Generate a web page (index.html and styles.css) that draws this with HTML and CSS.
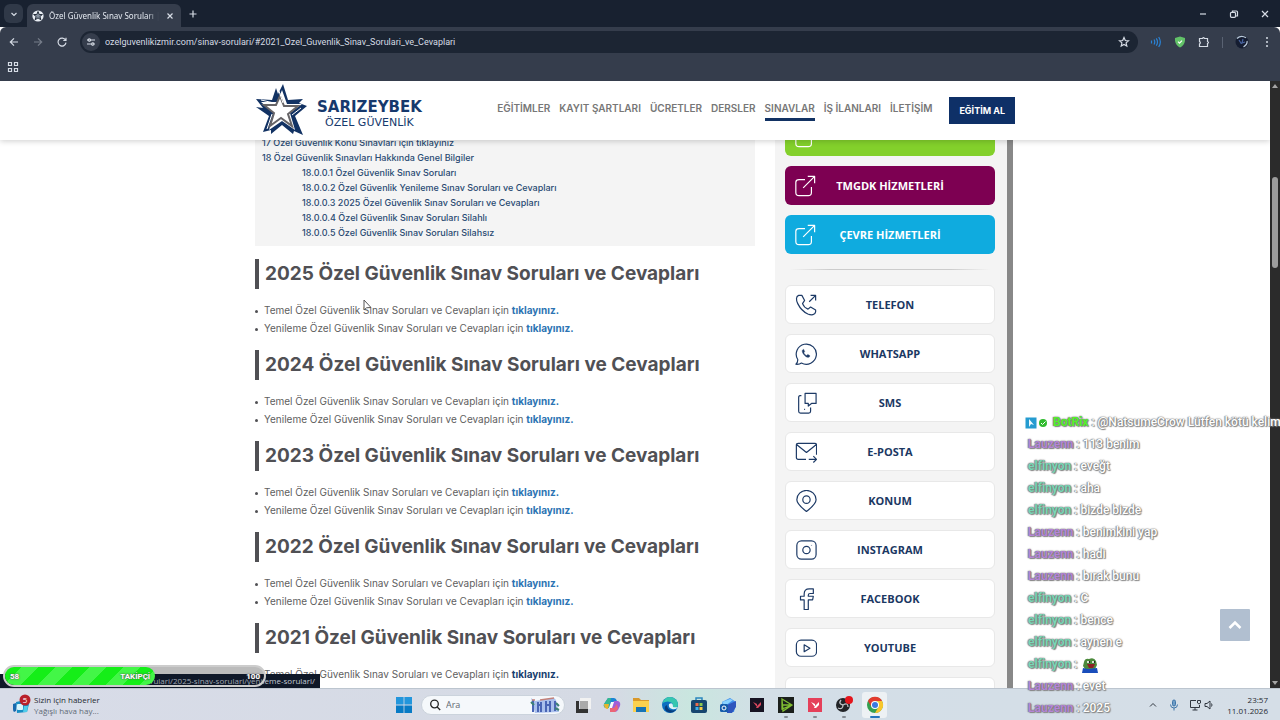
FILE: index.html
```html
<!DOCTYPE html>
<html lang="tr">
<head>
  <meta charset="UTF-8">
  <meta name="viewport" content="width=device-width, initial-scale=1">
  <title>Özel Güvenlik Sınav Soruları</title>
  <link rel="stylesheet" href="styles.css">
</head>
<body>
  <div class="tabstrip">
    <button class="tab-search" aria-label="Sekme ara"><svg width="10" height="10" viewBox="0 0 10 10"><path d="M2.500 4l2.500 2.500 2.500-2.500"/></svg></button>
    <div class="tab">
      <svg class="favicon" width="12" height="12" viewBox="0 0 12 12"><circle cx="6" cy="6" r="5.600" fill="#e8edf3" stroke="none"/><path d="M6 1.500l1.200 3h3.200L7.900 6.500l1 3.300L6 7.900 3.100 9.800l1-3.300L1.600 4.500h3.200z" fill="#8893a1" stroke="#27303e"/></svg>
      <span class="tab-title">Özel Güvenlik Sınav Soruları | Ö</span>
      <button class="tab-close" aria-label="Kapat"><svg width="8" height="8" viewBox="0 0 8 8"><path d="M1.500 1.500l5 5M6.500 1.500l-5 5"/></svg></button>
    </div>
    <button class="tab-new" aria-label="Yeni sekme"><svg width="10" height="10" viewBox="0 0 10 10"><path d="M5 1.500v7M1.500 5h7"/></svg></button>
    <div class="window-buttons">
      <button aria-label="Küçült"><svg width="10" height="10" viewBox="0 0 10 10"><path d="M2 5h6"/></svg></button>
      <button aria-label="Geri yükle"><svg width="10" height="10" viewBox="0 0 10 10"><rect x="1.500" y="3.300" width="5" height="5" rx="1"/><path d="M3.500 3V2h4q1 0 1 1v4h-1.500"/></svg></button>
      <button aria-label="Kapat"><svg width="10" height="10" viewBox="0 0 10 10"><path d="M2 2l6 6M8 2L2 8"/></svg></button>
    </div>
  </div>

  <div class="toolbar">
    <button aria-label="Geri"><svg width="12" height="12" viewBox="0 0 12 12"><path d="M10 6H2.500M6 2.300L2.300 6 6 9.700"/></svg></button>
    <button class="dim" aria-label="İleri"><svg width="12" height="12" viewBox="0 0 12 12"><path d="M2 6h7.500M6 2.300L9.700 6 6 9.700"/></svg></button>
    <button aria-label="Yenile"><svg width="12" height="12" viewBox="0 0 12 12"><path d="M9.500 4A4 4 0 1 0 10 6.700M10 1.800v2.700H7.300"/></svg></button>
    <div class="omnibox">
      <span class="site-info"><svg width="10" height="10" viewBox="0 0 10 10"><path d="M1 3h1M5 3h4M1 7h4M8.500 7H9"/><circle cx="3.300" cy="3" r="1.200"/><circle cx="6.800" cy="7" r="1.200"/></svg></span>
      <input type="text" aria-label="Adres çubuğu" value="ozelguvenlikizmir.com/sinav-sorulari/#2021_Ozel_Guvenlik_Sinav_Sorulari_ve_Cevaplari">
      <button aria-label="Yer işareti ekle"><svg width="12" height="12" viewBox="0 0 12 12"><path d="M6 1.500l1.300 3 3.200.3-2.400 2.100.7 3.200L6 8.400l-2.800 1.700.7-3.200L1.500 4.800l3.200-.3z"/></svg></button>
    </div>
    <div class="extensions">
      <button aria-label="Ses"><svg class="blue" width="12" height="12" viewBox="0 0 12 12"><path d="M1.500 4.500v3M4 3.500q1.500 2.500 0 5M6.300 2.300q2.400 3.700 0 7.400M8.700 1q3.300 5 0 10"/></svg></button>
      <button aria-label="Koruma"><svg width="12" height="12" viewBox="0 0 12 12"><path d="M6 .6l5 1.300c.3 4.200-1 7.500-5 9.500C2 9.400.7 6.100 1 1.900z" fill="#62c268" stroke="none"/><path d="M4 5.700l1.500 1.500L8 4.600" stroke="#fff"/></svg></button>
      <button aria-label="Uzantılar"><svg width="12" height="12" viewBox="0 0 12 12"><path d="M1.500 2.500h3q1-1.700 2 0h3v3q2 1 0 2v3h-8V8q1.700-1.200 0-2.500z"/></svg></button>
      <span class="separator"></span>
      <button aria-label="Profil"><svg width="14" height="14" viewBox="0 0 14 14"><circle cx="7" cy="7" r="6.500" fill="#151d31" stroke="none"/><path d="M2 3.500q4-4 9-.8M12 6q.8 3.500-3.500 6" stroke="#b9c9d8"/><path d="M4 5l2.500 4M8 4l-1 4 3-1" stroke="#48639f"/></svg></button>
      <button aria-label="Menü"><svg width="12" height="12" viewBox="0 0 12 12"><g fill="#d6dce5" stroke="none"><circle cx="6" cy="2" r="1"/><circle cx="6" cy="6" r="1"/><circle cx="6" cy="10" r="1"/></g></svg></button>
    </div>
  </div>

  <div class="bookmarks">
    <button aria-label="Uygulamalar"><svg width="12" height="12" viewBox="0 0 12 12"><path d="M1.500 1.500h3v3h-3zM7.500 1.500h3v3h-3zM1.500 7.500h3v3h-3zM7.500 7.500h3v3h-3z"/></svg></button>
  </div>

  <div class="viewport">
    <div class="page">
      <header class="site-header">
        <div class="container header-row">
          <a class="logo" href="#">
            <svg width="54" height="54" viewBox="0 0 54 54">
              <path fill="#123263" d="M21 4l2 6 5-10 5 16 15-1-4 4 8 3-12 10 8 19-9-4-1 3-11-9-11 9 0-4-8 2 6-16L1 23l7 1-7-9 16 1z"/>
              <path fill="#fff" d="M27 6l5 14h15L35 29l5 17-13-9-13 9 5-17L6 18h16z"/>
              <path fill="#fff" stroke="#666467" stroke-width="2" d="M25 12l4 10 14 0-10 8 4 12-11-8-11 8 4-13L9 21h12z"/>
              <path fill="none" stroke="#fff" stroke-width="1" d="M24 7l4 12M6 16l13 3M17 30l-5 15M46 24l-9 7"/>
            </svg>
            <span class="logo-text"><strong>SARIZEYBEK</strong><span>ÖZEL GÜVENLİK</span></span>
          </a>
          <nav class="main-nav">
            <a href="#">EĞİTİMLER</a>
            <a href="#">KAYIT ŞARTLARI</a>
            <a href="#">ÜCRETLER</a>
            <a href="#">DERSLER</a>
            <a class="active" href="#">SINAVLAR</a>
            <a href="#">İŞ İLANLARI</a>
            <a href="#">İLETİŞİM</a>
          </nav>
          <a class="cta" href="#">EĞİTİM AL</a>
        </div>
      </header>

      <div class="container columns">
        <main>
          <ul class="toc">
            <li><a href="#">17 Özel Güvenlik Konu Sınavları için tıklayınız</a></li>
            <li><a href="#">18 Özel Güvenlik Sınavları Hakkında Genel Bilgiler</a>
              <ul>
                <li><a href="#">18.0.0.1 Özel Güvenlik Sınav Soruları</a></li>
                <li><a href="#">18.0.0.2 Özel Güvenlik Yenileme Sınav Soruları ve Cevapları</a></li>
                <li><a href="#">18.0.0.3 2025 Özel Güvenlik Sınav Soruları ve Cevapları</a></li>
                <li><a href="#">18.0.0.4 Özel Güvenlik Sınav Soruları Silahlı</a></li>
                <li><a href="#">18.0.0.5 Özel Güvenlik Sınav Soruları Silahsız</a></li>
              </ul>
            </li>
          </ul>

          <h2>2025 Özel Güvenlik Sınav Soruları ve Cevapları</h2>
          <ul class="exams">
            <li>Temel Özel Güvenlik Sınav Soruları ve Cevapları için <a href="#">tıklayınız.</a></li>
            <li>Yenileme Özel Güvenlik Sınav Soruları ve Cevapları için <a href="#">tıklayınız.</a></li>
          </ul>
          <h2>2024 Özel Güvenlik Sınav Soruları ve Cevapları</h2>
          <ul class="exams">
            <li>Temel Özel Güvenlik Sınav Soruları ve Cevapları için <a href="#">tıklayınız.</a></li>
            <li>Yenileme Özel Güvenlik Sınav Soruları ve Cevapları için <a href="#">tıklayınız.</a></li>
          </ul>
          <h2>2023 Özel Güvenlik Sınav Soruları ve Cevapları</h2>
          <ul class="exams">
            <li>Temel Özel Güvenlik Sınav Soruları ve Cevapları için <a href="#">tıklayınız.</a></li>
            <li>Yenileme Özel Güvenlik Sınav Soruları ve Cevapları için <a href="#">tıklayınız.</a></li>
          </ul>
          <h2>2022 Özel Güvenlik Sınav Soruları ve Cevapları</h2>
          <ul class="exams">
            <li>Temel Özel Güvenlik Sınav Soruları ve Cevapları için <a href="#">tıklayınız.</a></li>
            <li>Yenileme Özel Güvenlik Sınav Soruları ve Cevapları için <a href="#">tıklayınız.</a></li>
          </ul>
          <h2>2021 Özel Güvenlik Sınav Soruları ve Cevapları</h2>
          <ul class="exams">
            <li>Temel Özel Güvenlik Sınav Soruları ve Cevapları için <a class="dark" href="#">tıklayınız.</a></li>
          </ul>
        </main>

        <aside class="sidebar">
          <div class="side-list">
            <a class="side-btn green" href="#" aria-label="Hizmetler"><svg viewBox="0 0 24 24"><path d="M13 4.500H5.500Q2 4.500 2 8v11q0 3.500 3.500 3.500h10Q19 22.500 19 19v-7M10 14L22 2M15 1.500h7.500V9"/></svg></a>
            <a class="side-btn purple" href="#"><svg viewBox="0 0 24 24"><path d="M12 5H5.500Q2 5 2 8v11q0 3.500 3.500 3.500h10Q19 22.500 19 19v-6M10 14L22 2M15 1.500h7.500V9"/></svg><span>TMGDK HİZMETLERİ</span></a>
            <a class="side-btn cyan" href="#"><svg viewBox="0 0 24 24"><path d="M12 5H5.500Q2 5 2 8v11q0 3.500 3.500 3.500h10Q19 22.500 19 19v-6M10 14L22 2M15 1.500h7.500V9"/></svg><span>ÇEVRE HİZMETLERİ</span></a>
            <hr>
            <a class="side-btn" href="#"><svg viewBox="0 0 24 24"><path d="M4 1.500c-3 1-3 5-1 9 2.500 5 6 9 11 11.300 4 1.600 8 1.200 8.500-2.300v-2l-5.500-3.300-2.800 2.300c-3-1.300-5-3.300-6-6L10.500 7 7.500 1.500zM15.500 8.500L22 2M17 1.500h5.500V7"/></svg><span>TELEFON</span></a>
            <a class="side-btn" href="#"><svg viewBox="0 0 24 24"><path d="M3 18a11 11 0 1 1 4 3.800Q5 23.500 1 23.200 3.200 21 3 18z"/><path fill="#1d3a66" d="M9 7c-2 1-.8 4 1 6s4.500 3.700 6 1.700v-1l-2-1.200-1.200 1.200c-1.700-.7-2.500-1.500-3.200-3.200l.9-1L9.500 7z" stroke-width="0.500"/></svg><span>WHATSAPP</span></a>
            <a class="side-btn" href="#"><svg viewBox="0 0 24 24"><path d="M7 4H5.500Q4 4 4 6v15q0 2 2 2h9q2 0 2-2v-4M11 1.500h12v11h-5l-3.500 2.800V12.500H11zM10 19h1"/></svg><span>SMS</span></a>
            <a class="side-btn" href="#"><svg viewBox="0 0 24 24"><path d="M12 20H3.500Q1.500 20 1.500 18V4.500q0-2 2-2h18q2 0 2 2V15M2 4l10.500 8.500L23 4M15 20h8M20 16.500l3.500 3.500-3.500 3.500"/></svg><span>E-POSTA</span></a>
            <a class="side-btn" href="#"><svg viewBox="0 0 24 24"><path d="M12.500 23.500Q2 15 2 10.500a10.500 10 0 0 1 21 0Q23 15 12.500 23.500z"/><circle cx="12.500" cy="10.500" r="4"/></svg><span>KONUM</span></a>
            <a class="side-btn" href="#"><svg viewBox="0 0 24 24"><rect x="2" y="2" width="21" height="20" rx="5"/><circle cx="12.500" cy="12" r="4"/><path d="M18 6.500v.5"/></svg><span>INSTAGRAM</span></a>
            <a class="side-btn" href="#"><svg viewBox="0 0 24 24"><path d="M10 23.500V13H6V9h4V6.500Q10 1 15.500 1H20v5h-3.500q-2 0-2 2v1H20l-.8 4h-4.700v10.500z"/></svg><span>FACEBOOK</span></a>
            <a class="side-btn" href="#"><svg viewBox="0 0 24 24"><rect x="1.500" y="3.500" width="22" height="17.500" rx="5"/><path d="M10 8.500v7.500l6.300-3.800z"/></svg><span>YOUTUBE</span></a>
            <a class="side-btn" href="#" aria-label="Diğer"></a>
          </div>
        </aside>
      </div>
    </div>

    <div class="scrollbar">
      <svg width="8" height="6" viewBox="0 0 8 6"><path d="M4 1l3 4H1z"/></svg>
      <div class="track"><div class="thumb"></div></div>
      <svg width="8" height="6" viewBox="0 0 8 6"><path d="M4 5L1 1h6z"/></svg>
    </div>

    <a class="to-top" href="#" aria-label="Yukarı çık"><svg width="14" height="10" viewBox="0 0 14 10"><path d="M1.500 8L7 2.500 12.500 8"/></svg></a>
    <div class="status">sorulari/2025-sinav-sorulari/yenileme-sorulari/</div>
  </div>

  <footer class="taskbar">
    <div class="news">
      <svg width="20" height="22" viewBox="0 0 20 22"><path d="M4 8l9-2 4 4-2 8-10 1z" fill="#168dc4"/><path d="M1 10l3-1v8l-2 1q-1-1-1-3z" fill="#1769ae"/><rect x="5" y="10" width="6" height="6" rx="1" fill="#d9f5fd"/><path d="M12 12h4l-1 6h-4z" fill="#50ccea"/><circle cx="13" cy="6" r="5.500" fill="#b9202b"/><text x="13" y="9" font-size="8" text-anchor="middle" fill="#fff">5</text></svg>
      <div class="news-text"><span>Sizin için haberler</span><span class="sub">Yağışlı hava hay...</span></div>
    </div>
    <div class="apps">
      <button aria-label="Başlat"><svg viewBox="0 0 18 18"><path fill="#2296dc" d="M1 1h7.600v7.600H1zM9.400 1H17v7.600H9.400z"/><path fill="#087bc5" d="M1 9.400h7.600V17H1zM9.400 9.400H17V17H9.400z"/></svg></button>
      <div class="search">
        <svg width="12" height="12" viewBox="0 0 12 12"><circle cx="5.500" cy="5" r="3.800"/><path d="M8.200 8l3 3"/></svg>
        <input type="text" placeholder="Ara" aria-label="Ara">
        <svg class="search-art" width="30" height="16" viewBox="0 0 30 16"><path d="M1 1l4 3 19-3 2 2 3 12-24 1z" fill="#aac0ec"/><path d="M3 3v12M8 5v10M11 5v10M16 4v11M20 4v11M25 4v10M7 8h5M15 8h6" stroke="#4a65b5" stroke-width="2"/><path d="M2 3h3M10 3l14-2" stroke="#c38179"/><path d="M1 5l3 3M25 11l4 2M26 6l3 3" stroke="#3d8176" stroke-width="2"/></svg>
      </div>
      <button aria-label="Görev görünümü"><svg viewBox="0 0 18 18"><path fill="#f2f2f2" d="M6 2h11v11H6z"/><path fill="#333" d="M2 5h3v8h9v4H2z"/><path fill="#aaa" d="M6 5h8v8H6z"/></svg></button>
      <button aria-label="Copilot"><svg viewBox="0 0 18 18"><path fill="#1c85d5" d="M5 2h6q2 0 3 3l-4 1-2 6H3q-3-1-2-4z"/><path fill="#35b891" d="M5 2h3L6 12H3q-3-1-2-4z"/><path fill="#e7b52e" d="M1 8h5l-1 5q-4 0-4-5z"/><path fill="#a05fd8" d="M11 5h4q3 1 2 5l-2 4q-1 2-4 2H7z"/><path fill="#eb6576" d="M7 12h4l3-4 1 5-3 3H7z"/><path fill="#f7f8fb" d="M8 6h3l-2 6H6z"/></svg></button>
      <button aria-label="Dosya Gezgini"><svg viewBox="0 0 18 18"><path fill="#d9992a" d="M1 2h6l2 2h8v4H1z"/><path fill="#fbd14e" d="M1 5h16v11H1z"/><path fill="#1774b5" d="M4 11h10v5H4z"/></svg></button>
      <button aria-label="Edge"><svg viewBox="0 0 18 18"><circle cx="9" cy="9" r="8" fill="#0c6fc1"/><path fill="#37c7b0" d="M1.500 7Q4 0 11 1.200 17 3 17 9q-1 4-6 3 2-3 0-5-4-3-9.500 0z"/><path fill="#083d7c" d="M6 9q0 7 9 5-5 5-10 1-3-4 1-6z"/><path fill="#e1f4f8" d="M8 8q4-2 4 2-1 2 5 1-2 3-6 2-4-1-3-5z"/></svg></button>
      <button aria-label="Store"><svg viewBox="0 0 18 18"><path d="M6 5V2h6v3" fill="none" stroke="#2b86bd" stroke-width="1.500"/><rect x="1" y="4" width="16" height="13" rx="2" fill="#16466f"/><path fill="#eb6c4c" d="M5.500 7h3v3h-3z"/><path fill="#8bc850" d="M9.500 7h3v3h-3z"/><path fill="#3fb3ec" d="M5.500 11h3v3h-3z"/><path fill="#f8ca45" d="M9.500 11h3v3h-3z"/></svg></button>
      <button aria-label="Posta"><svg viewBox="0 0 18 18"><path fill="#3f8ceb" d="M3 6l8-4 6 4-2 10H5z"/><path fill="#2d55bd" d="M8 9l9-4v6l-4 6H8z"/><path fill="#8ad2ff" d="M3 6l8-3 3 1-8 6z"/><rect x="1" y="8" width="8" height="8" rx="1.500" fill="#155cab"/><circle cx="5" cy="12" r="2" fill="none" stroke="#fff"/></svg></button>
      <button aria-label="Valorant"><svg viewBox="0 0 18 18"><path fill="#171323" d="M2 2h14v14H2z"/><path fill="#d8475e" d="M5 6l4 5V8zM13 6v3l-3 3H8l1-2z"/></svg></button>
      <button class="open" aria-label="Oyun"><svg viewBox="0 0 18 18"><path fill="#1b1f1c" d="M1 1h16v16H1z"/><path d="M5 3l10 6-9 6zM5 3v10l10-4M5 9h10" fill="none" stroke="#80bd32" stroke-width="1.300"/></svg></button>
      <button class="open" aria-label="Valorant"><svg viewBox="0 0 18 18"><path fill="#e5405a" d="M2 2h14v14H2z"/><path fill="#fff" d="M5 6l4 5V8zM13 6v3l-3 3H8l1-2z"/></svg></button>
      <button class="open" aria-label="OBS"><svg viewBox="0 0 18 18"><circle cx="8" cy="9" r="7" fill="#222427"/><path d="M8 9q-5-1-2-5M8 9q5-3 5 2M8 9q0 5-5 3" fill="none" stroke="#bdc0c5" stroke-width="1.300"/><circle cx="14" cy="4" r="4" fill="#e4151c"/></svg></button>
      <button class="current" aria-label="Chrome"><svg viewBox="0 0 18 18"><circle cx="9" cy="9" r="8" fill="#34a04f"/><path fill="#e33b2e" d="M2 5a8 8 0 0 1 14 0H9L5.500 11z"/><path fill="#f9c62b" d="M16 5a8 8 0 0 1-7 12l3.500-6L11 5z"/><circle cx="9" cy="9" r="4" fill="#fff"/><circle cx="9" cy="9" r="3" fill="#3b79df"/></svg></button>
    </div>
    <div class="tray">
      <svg width="12" height="12" viewBox="0 0 12 12"><path d="M3 7.500l3-3 3 3"/></svg>
      <svg class="mic" width="12" height="12" viewBox="0 0 12 12"><rect x="4.500" y="1" width="3" height="6" rx="1.500" fill="#6d9cc7"/><path d="M2.500 5.500q0 3.500 3.500 3.500t3.500-3.500M6 9v2.500"/></svg>
      <svg width="26" height="12" viewBox="0 0 26 12"><path d="M7 1.500H1.500v7h9V6M3.500 11h5M6 8.500V11M8.500 1.500h3v2.500l-1.500 1-1.500-1zM16 4.500h2l3-2.500v8l-3-2.500h-2zM22.500 4.500q1 1.500 0 3"/></svg>
      <div class="clock"><span>23:57</span><span>11.01.2026</span></div>
    </div>
  </footer>

  <!-- stream overlays -->
  <div class="goal">
    <div class="goal-fill"><span>58</span><span>TAKİPÇİ</span></div>
    <span class="goal-max">100</span>
  </div>

  <div class="chat">
    <p class="bot"><svg width="12" height="12" viewBox="0 0 12 12"><rect x="0.500" y="0.500" width="11" height="11" fill="#259bd0"/><path d="M4 2l5 6-3-1-2 3z" fill="#eefaff"/></svg><svg width="10" height="12" viewBox="0 0 10 12"><circle cx="5" cy="6" r="4" fill="#31bb2f"/><path d="M3 6l1.500 1.500L7.500 4.500" fill="none" stroke="#fff"/></svg><b class="lime">BotRix</b> : @NatsumeCrow Lütfen kötü kelim</p>
    <p><b class="violet">Lauzenn</b> : 113 benim</p>
    <p><b class="mint">elfinyon</b> : eveğt</p>
    <p><b class="mint">elfinyon</b> : aha</p>
    <p><b class="mint">elfinyon</b> : bizde bizde</p>
    <p><b class="violet">Lauzenn</b> : benimkini yap</p>
    <p><b class="violet">Lauzenn</b> : hadi</p>
    <p><b class="violet">Lauzenn</b> : bırak bunu</p>
    <p><b class="mint">elfinyon</b> : C</p>
    <p><b class="mint">elfinyon</b> : bence</p>
    <p><b class="mint">elfinyon</b> : aynen e</p>
    <p><b class="mint">elfinyon</b> : <svg class="emote" width="16" height="16" viewBox="0 0 16 16"><path fill="#4c8a3c" d="M2 5q1-4 5-3 5-2 7 2l1 4-2 4H3L1 9z"/><path fill="#d9e3d2" d="M5 4h3v2H5zM10 4h3v2h-3z"/><path fill="#222" d="M7 4h1v2H7zM12 4h1v2h-1z"/><path fill="#8e2025" d="M5 7h8l-2 4H7z"/><path fill="#194dbb" d="M1 11l5 1 9-1 1 5H0z"/></svg></p>
    <p><b class="violet">Lauzenn</b> : evet</p>
    <p><b class="violet">Lauzenn</b> : 2025</p>
  </div>

  <svg class="cursor" width="10" height="14" viewBox="0 0 10 14"><path d="M1 1v10l2.500-2.200L8 8.500z"/></svg>
</body>
</html>
```
FILE: styles.css
```css
* { box-sizing: border-box; }
html, body { height: 100%; }
body { margin: 0; display: flex; flex-direction: column; position: relative; overflow: hidden; background: #fff; font-family: "Open Sans", "Noto Sans", sans-serif; font-size: 10px; }
button { border: 0; padding: 0; background: none; display: flex; align-items: center; justify-content: center; }
a { text-decoration: none; }
ul { list-style: none; margin: 0; padding: 0; }
input { border: 0; outline: 0; background: none; min-width: 0; font-family: inherit; padding: 0; }
svg { flex-shrink: 0; }

/* browser */
.tabstrip { height: 27px; flex-shrink: 0; background: #182130; display: flex; align-items: center; padding-left: 4px; }
.tabstrip svg, .toolbar svg, .bookmarks svg { fill: none; stroke: #d6dce5; stroke-width: 1.2; }
.tab-search { width: 19px; height: 19px; border-radius: 6px; background: #303948; }
.tab { width: 154px; height: 23px; margin: 4px 0 0 4px; padding: 0 5px; border-radius: 6px 6px 0 0; background: #353d4c; display: flex; align-items: center; gap: 5px; }
.tab .favicon { stroke-width: 1; }
.tab-title { flex: 1; overflow: hidden; white-space: nowrap; font-family: "Noto Sans", sans-serif; font-size: 8px; color: #e3e8ef; mask-image: linear-gradient(90deg, #000 90%, transparent); }
.tab-close { width: 12px; height: 12px; }
.tab-new { width: 24px; height: 24px; }
.window-buttons { margin-left: auto; display: flex; }
.window-buttons button { width: 31px; height: 27px; }
.toolbar { height: 30px; flex-shrink: 0; background: #353d4c; display: flex; align-items: center; padding: 0 7px 0 8px; gap: 12px; border-radius: 6px 6px 0 0; }
.toolbar .dim { opacity: 0.4; }
.omnibox { flex: 1; height: 22px; border-radius: 11px; background: #1c2533; display: flex; align-items: center; padding: 0 8px 0 2px; gap: 5px; }
.site-info { width: 18px; height: 18px; border-radius: 50%; background: #353d4c; display: flex; align-items: center; justify-content: center; }
.omnibox input { flex: 1; font-family: Roboto, sans-serif; font-size: 9px; color: #d6dce5; }
.extensions { display: flex; align-items: center; gap: 12px; }
.extensions .blue { stroke: #2a83d6; }
.extensions .separator { width: 1px; height: 11px; background: #596272; }
.bookmarks { height: 24px; flex-shrink: 0; background: #353d4c; padding: 4px 7px; }

.viewport { flex: 1; min-height: 0; display: flex; position: relative; }
.page { flex: 1; overflow: hidden; background: #fff; font-family: Inter, sans-serif; }
.scrollbar { width: 10px; background: #2b2b2b; display: flex; flex-direction: column; align-items: center; padding: 2px 0; }
.scrollbar svg { fill: #a5a5a5; }
.track { flex: 1; width: 6px; padding-top: 88px; }
.thumb { height: 91px; border-radius: 3px; background: #9d9d9d; }

/* site */
.container { max-width: 760px; margin: 0 auto; }
.site-header { position: relative; z-index: 1; background: #fff; box-shadow: 0 1px 6px rgba(0, 0, 0, 0.2); }
.header-row { height: 59px; display: flex; align-items: center; }
.logo { display: flex; align-items: center; gap: 8px; color: #16396d; font-family: "DejaVu Sans", sans-serif; }
.logo-text { display: flex; flex-direction: column; align-items: center; padding-top: 8px; font-size: 11px; line-height: 15px; }
.logo-text strong { font-size: 15px; }
.main-nav { display: flex; gap: 9px; margin: 0 17px 2px auto; font-size: 10px; font-weight: 600; line-height: 20px; white-space: nowrap; }
.main-nav a { color: #777; border-bottom: 3px solid transparent; }
.main-nav .active { border-bottom-color: #123263; }
.cta { padding: 0 10px; line-height: 27px; background: #0e3067; color: #fff; font-size: 9px; font-weight: 700; white-space: nowrap; }

.columns { display: grid; grid-template-columns: 25fr 12fr; gap: 20px; }
.toc { margin-top: -5px; padding: 0 7px 6px; background: #f4f4f4; font-size: 9px; font-weight: 500; line-height: 15px; }
.toc a { color: #294a72; }
.toc ul { padding-left: 40px; }
h2 { margin: 13px 0 12px; padding-left: 6px; border-left: 4px solid #505054; color: #505054; font-size: 19px; line-height: 30px; font-weight: 700; white-space: nowrap; }
.exams { color: #606060; font-size: 10px; line-height: 18px; }
.exams li::before { content: ""; display: inline-block; width: 3px; height: 3px; margin-right: 6px; border-radius: 50%; background: #505054; vertical-align: middle; }
.exams a { color: #2c74b3; font-weight: 700; }
.exams .dark { color: #17406f; }

.sidebar { height: 548px; overflow: hidden; background: #f4f4f4; border-right: 2px solid #fff; }
.side-list { margin-top: -23px; padding: 0 12px 0 10px; border-right: 6px solid #888; display: flex; flex-direction: column; gap: 10px; }
.side-btn { height: 39px; padding: 0 9px; border: 1px solid #e8e8e8; border-radius: 6px; background: #fff; color: #1b3863; display: flex; align-items: center; font-family: "Open Sans", sans-serif; font-size: 11px; font-weight: 700; }
.side-btn svg { width: 22px; height: 22px; fill: none; stroke: #1d3a66; stroke-width: 1.3; stroke-linejoin: round; }
.side-btn span { flex: 1; text-align: center; padding-right: 22px; }
.side-btn.green, .side-btn.purple, .side-btn.cyan { border: 0; color: #fff; }
.side-btn.green { background: #83d02b; }
.side-btn.purple { background: #7d0052; }
.side-btn.cyan { background: #0fabdf; }
.green svg, .purple svg, .cyan svg { stroke: #fff; }
hr { width: 95%; height: 1px; margin: 5px auto; border: 0; background: linear-gradient(90deg, transparent, #ccc 20%, #ccc 80%, transparent); }

.to-top { position: absolute; right: 30px; bottom: 47px; width: 30px; height: 32px; background: #b1bfd0; display: flex; align-items: center; justify-content: center; border-radius: 1px; }
.to-top svg { fill: none; stroke: #fff; stroke-width: 2.5; }
.status { position: absolute; left: 0; bottom: 0; width: 320px; height: 14px; padding-right: 5px; background: #0f1828; color: #c3cad4; font-size: 8px; line-height: 14px; display: flex; justify-content: flex-end; white-space: nowrap; }

/* taskbar */
.taskbar { height: 32px; flex-shrink: 0; padding: 0 12px; background: linear-gradient(90deg, #d8dce8, #d5dae4 48%, #c9e6df 54%, #d3dee7 60%, #d5dee7); border-top: 1px solid #bcc5cf; display: grid; grid-template-columns: 1fr auto 1fr; align-items: center; }
.news { display: flex; align-items: center; gap: 2px; }
.news-text { display: flex; flex-direction: column; font-size: 8px; line-height: 11px; color: #252a31; }
.news-text .sub { color: #626b76; }
.apps { display: flex; align-items: center; margin-right: 4px; }
.apps button { position: relative; width: 29px; height: 26px; border-radius: 3px; }
.apps button svg { width: 18px; height: 18px; }
.apps .open::after, .apps .current::after { content: ""; position: absolute; bottom: 0; width: 4px; height: 2px; border-radius: 1px; background: #858c94; }
.apps .current { width: 25px; margin-left: 4px; background: #edf1f4; }
.apps .current::after { width: 10px; background: #2475bd; }
.search { width: 144px; height: 20px; margin: 0 3px; padding: 0 4px 0 7px; border: 1px solid #cbd3dc; border-radius: 10px; background: #f5f8fb; display: flex; align-items: center; gap: 5px; }
.search svg { fill: none; stroke: #222; stroke-width: 1.3; }
.search .search-art { stroke: none; }
.search input { flex: 1; font-size: 9px; }
.search input::placeholder { color: #626871; }
.tray { display: flex; align-items: center; justify-content: flex-end; gap: 9px; }
.tray svg { fill: none; stroke: #303740; }
.tray .mic { stroke: #3f76a9; }
.clock { width: 44px; display: flex; flex-direction: column; align-items: flex-end; font-size: 8px; line-height: 11px; color: #252a31; }

/* overlays */
.goal { position: absolute; left: 3px; bottom: 33px; width: 263px; height: 22px; border: 2px solid #ccc; border-radius: 11px; background: linear-gradient(#bbb 7px, rgba(15, 24, 40, 0.2) 7px); display: flex; align-items: center; justify-content: space-between; color: #fff; font-family: Roboto, sans-serif; font-size: 8px; font-weight: 700; text-shadow: 0 0 2px #555, 0 0 1px #555; }
.goal-fill { width: 58%; height: 18px; padding: 0 5px; border-radius: 9px; background: repeating-linear-gradient(135deg, #15ee18 0 12px, #43f647 12px 24px); display: flex; align-items: center; justify-content: space-between; }
.goal-max { padding-right: 4px; }
.chat { position: absolute; left: 1025px; right: 0; bottom: 1px; overflow: hidden; font-family: Roboto, sans-serif; font-size: 12px; line-height: 22px; font-weight: 500; color: #fff; text-shadow: 0 0 1px #666, 1px 1px 1px #888, -1px 0 1px #999, 0 0 2px #888; }
.chat p { height: 22px; margin: 0; padding-left: 3px; white-space: nowrap; }
.chat .bot { padding-left: 0; }
.chat .bot svg { margin-right: 1px; vertical-align: middle; }
.chat b { font-weight: 700; }
.chat .lime { color: #54f22b; margin-left: 4px; }
.chat .violet { color: #b585d6; }
.chat .mint { color: #79d6b6; }
.chat .emote { vertical-align: middle; margin-left: 2px; }
.cursor { position: absolute; left: 363px; top: 299px; fill: #fff; stroke: #555; stroke-width: 1; }
```
